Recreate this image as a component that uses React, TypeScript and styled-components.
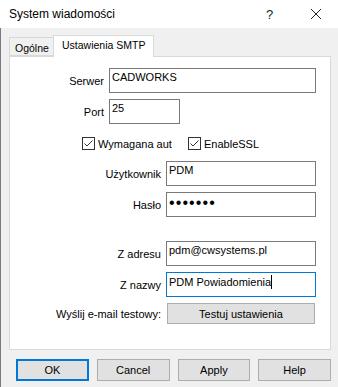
import styled, { createGlobalStyle } from "styled-components";

const Global = createGlobalStyle`
  html, body { margin: 0; padding: 0; background: #f0f0f0; }
  body { font-family: "Liberation Sans", Arial, sans-serif; color: #000; }
`;

const Window = styled.div`
  width: 338px;
  height: 387px;
  display: flex;
  flex-direction: column;
  overflow: hidden;
`;

const TitleBar = styled.div`
  height: 28px;
  flex: none;
  background: #fff;
  display: flex;
  align-items: center;
  padding-left: 9px;
  font-size: 12px;
`;

const Title = styled.div`
  flex: 1;
`;

const HelpGlyph = styled.div`
  width: 12px;
  margin-right: 32px;
  font-size: 13px;
  color: #222;
`;

const CloseGlyph = styled.svg`
  margin-right: 16px;
`;

const Body = styled.div`
  flex: 1;
  background: #f0f0f0;
  border-left: 1px solid #7a7a7a;
  padding: 7px 7px 0 8px;
`;

const TabStrip = styled.div`
  height: 21px;
  display: flex;
  align-items: flex-end;
`;

const Tab = styled.div<{ $active?: boolean; $w: number }>`
  width: ${(p) => p.$w}px;
  height: ${(p) => (p.$active ? 22 : 19)}px;
  margin-left: ${(p) => (p.$active ? -1 : 0)}px;
  margin-bottom: ${(p) => (p.$active ? -1 : 0)}px;
  position: relative;
  z-index: ${(p) => (p.$active ? 2 : 1)};
  box-sizing: border-box;
  background: ${(p) => (p.$active ? "#fff" : "#f0f0f0")};
  border: 1px solid #d9d9d9;
  border-bottom: ${(p) => (p.$active ? "none" : "1px solid #d9d9d9")};
  font-size: 10.5px;
  padding-top: ${(p) => (p.$active ? 3 : 4)}px;
  padding-left: ${(p) => (p.$active ? 8 : 5)}px;
  white-space: nowrap;
`;

const Panel = styled.div`
  width: 322px;
  height: 294px;
  box-sizing: border-box;
  background: #fff;
  border: 1px solid #d9d9d9;
  padding-top: 11px;
  display: flex;
  flex-direction: column;
  gap: 6px;
  font-size: 11px;
`;

const Row = styled.div<{ $mt?: number }>`
  display: flex;
  align-items: center;
  margin-top: ${(p) => p.$mt ?? 0}px;
`;

const Label = styled.div<{ $w: number }>`
  width: ${(p) => p.$w}px;
  margin-right: 5px;
  text-align: right;
  white-space: nowrap;
`;

const TextBox = styled.div<{ $w: number; $focused?: boolean }>`
  width: ${(p) => p.$w}px;
  height: 25px;
  box-sizing: border-box;
  border: 1px solid ${(p) => (p.$focused ? "#0078d7" : "#7a7a7a")};
  background: #fff;
  padding: 2px 2px 0 2px;
  line-height: 13px;
  white-space: nowrap;
  overflow: hidden;
`;

const Dots = styled.span`
  font-size: 16px;
  letter-spacing: 1.1px;
  line-height: 13px;
  position: relative;
  top: 1px;
`;

const Caret = styled.span`
  display: inline-block;
  width: 1px;
  height: 14px;
  background: #000;
  vertical-align: -3px;
`;

const CheckRow = styled.div`
  height: 25px;
  padding-left: 72px;
  display: flex;
  align-items: flex-start;
  gap: 16px;
`;

const CheckItem = styled.div<{ $w?: number }>`
  display: flex;
  align-items: center;
  gap: 3px;
  padding-top: 7px;
  width: ${(p) => (p.$w ? `${p.$w}px` : "auto")};
  overflow: hidden;
  white-space: nowrap;
`;

const Box = styled.div`
  width: 13px;
  height: 13px;
  flex: none;
  box-sizing: border-box;
  border: 1px solid #333;
  background: #fff;
  display: flex;
  align-items: center;
  justify-content: center;
`;

const PushButton = styled.div<{ $w: number; $default?: boolean }>`
  width: ${(p) => p.$w}px;
  height: 22px;
  box-sizing: border-box;
  background: #e1e1e1;
  border: ${(p) => (p.$default ? "2px solid #0078d7" : "1px solid #adadad")};
  display: flex;
  align-items: center;
  justify-content: center;
  font-size: 11px;
`;

const TestButton = styled(PushButton)`
  margin-left: 1px;
  height: 21px;
`;

const ButtonBar = styled.div`
  display: flex;
  gap: 8px;
  padding-left: 7px;
  margin-top: 9px;
`;

function Check({ label, w }: { label: string; w?: number }) {
  return (
    <CheckItem $w={w}>
      <Box>
        <svg width="11" height="11" viewBox="0 0 11 11">
          <polyline points="1.5,5.5 4,8 9.5,2.5" fill="none" stroke="#333" strokeWidth="1" />
        </svg>
      </Box>
      <span>{label}</span>
    </CheckItem>
  );
}

export default function App() {
  return (
    <Window>
      <Global />
      <TitleBar>
        <Title>System wiadomości</Title>
        <HelpGlyph>?</HelpGlyph>
        <CloseGlyph width="12" height="12" viewBox="0 0 12 12">
          <path d="M1 1 L11 11 M11 1 L1 11" stroke="#222" strokeWidth="1" />
        </CloseGlyph>
      </TitleBar>
      <Body>
        <TabStrip>
          <Tab $w={45}>Ogólne</Tab>
          <Tab $w={101} $active>Ustawienia SMTP</Tab>
        </TabStrip>
        <Panel>
          <Row>
            <Label $w={94}>Serwer</Label>
            <TextBox $w={207}>CADWORKS</TextBox>
          </Row>
          <Row>
            <Label $w={94}>Port</Label>
            <TextBox $w={71}>25</TextBox>
          </Row>
          <CheckRow>
            <Check label="Wymagana auto" w={90} />
            <Check label="EnableSSL" />
          </CheckRow>
          <Row>
            <Label $w={151}>Użytkownik</Label>
            <TextBox $w={150}>PDM</TextBox>
          </Row>
          <Row>
            <Label $w={151}>Hasło</Label>
            <TextBox $w={150}>
              <Dots>•••••••</Dots>
            </TextBox>
          </Row>
          <Row $mt={18}>
            <Label $w={151}>Z adresu</Label>
            <TextBox $w={150}>pdm@cwsystems.pl</TextBox>
          </Row>
          <Row>
            <Label $w={151}>Z nazwy</Label>
            <TextBox $w={150} $focused>
              PDM Powiadomienia
              <Caret />
            </TextBox>
          </Row>
          <Row>
            <Label $w={151}>Wyślij e-mail testowy:</Label>
            <TestButton $w={148}>Testuj ustawienia</TestButton>
          </Row>
        </Panel>
        <ButtonBar>
          <PushButton $w={73} $default>OK</PushButton>
          <PushButton $w={73}>Cancel</PushButton>
          <PushButton $w={73}>Apply</PushButton>
          <PushButton $w={73}>Help</PushButton>
        </ButtonBar>
      </Body>
    </Window>
  );
}
